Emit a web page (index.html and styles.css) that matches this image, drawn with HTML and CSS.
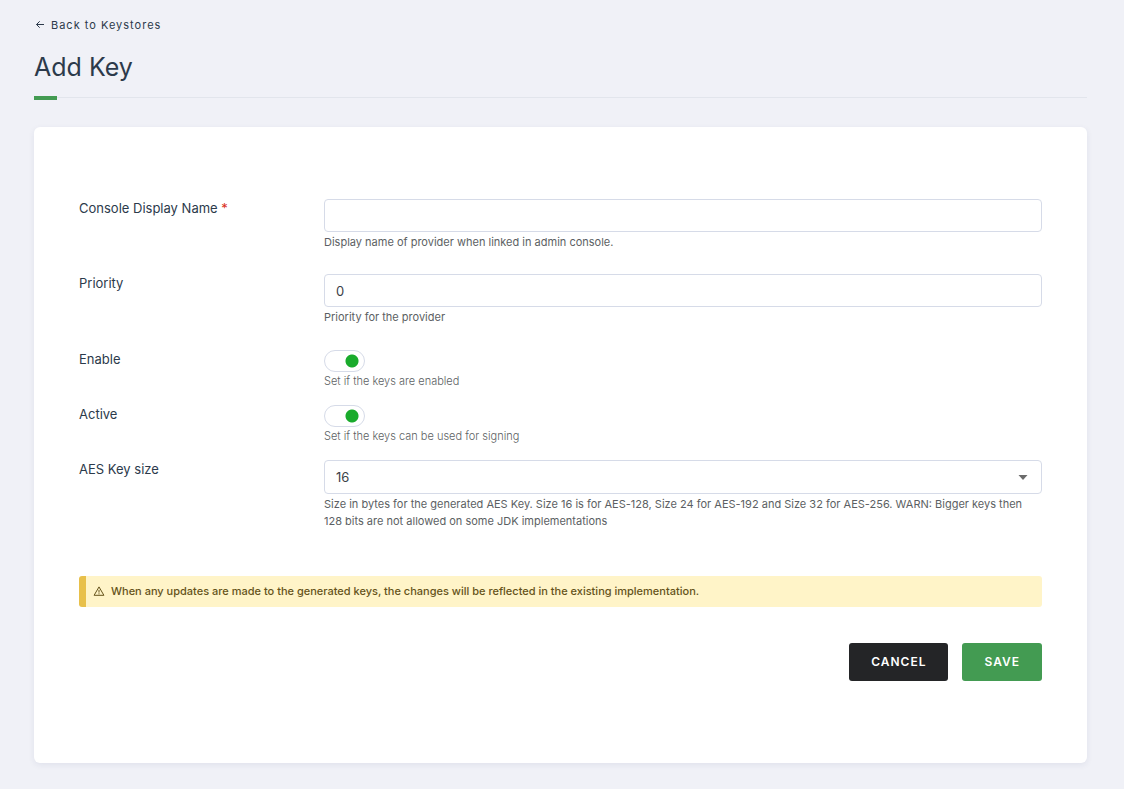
FILE: index.html
```html
<!DOCTYPE html>
<html lang="en">
<head>
<meta charset="utf-8">
<meta name="viewport" content="width=device-width, initial-scale=1">
<title>Add Key</title>
<link rel="stylesheet" href="styles.css">
</head>
<body>
<main class="page">
  <a class="back" href="#">
    <svg class="back-icon" viewBox="0 0 10 10" aria-hidden="true"><path d="M9 4.5H1.5M4.7 1.3 1.5 4.5l3.2 3.2"/></svg>
    <span>Back to Keystores</span>
  </a>
  <h1 class="title">Add Key</h1>
  <div class="divider"></div>
  <form class="card">
    <div class="field">
      <label class="label" for="name">Console Display Name <span class="required">*</span></label>
      <div class="control">
        <input class="input" id="name" type="text" required>
        <p class="help">Display name of provider when linked in admin console.</p>
      </div>
    </div>
    <div class="field field-number">
      <label class="label" for="priority">Priority</label>
      <div class="control">
        <input class="input" id="priority" type="text" value="0">
        <p class="help">Priority for the provider</p>
      </div>
    </div>
    <div class="field field-switch">
      <label class="label" for="enable">Enable</label>
      <div class="control">
        <input class="switch" id="enable" type="checkbox" checked>
        <p class="help">Set if the keys are enabled</p>
      </div>
    </div>
    <div class="field field-switch">
      <label class="label" for="active">Active</label>
      <div class="control">
        <input class="switch" id="active" type="checkbox" checked>
        <p class="help">Set if the keys can be used for signing</p>
      </div>
    </div>
    <div class="field field-select">
      <label class="label" for="size">AES Key size</label>
      <div class="control">
        <div class="select-wrap">
          <select class="input select" id="size"><option>16</option><option>24</option><option>32</option></select>
          <svg class="caret" viewBox="0 0 10 5" aria-hidden="true"><path d="M0.5 0h9L5 5z"/></svg>
        </div>
        <p class="help">Size in bytes for the generated AES Key. Size 16 is for AES-128, Size 24 for AES-192 and Size 32 for AES-256. WARN: Bigger keys then 128 bits are not allowed on some JDK implementations</p>
      </div>
    </div>
    <div class="notice">
      <svg class="notice-icon" viewBox="0 0 12 11" aria-hidden="true"><path d="M6 .9 10.9 9.3H1.1zM6 3.8v2.8M6 7.3v1"/></svg>
      <span>When any updates are made to the generated keys, the changes will be reflected in the existing implementation.</span>
    </div>
    <div class="actions">
      <button class="button button-dark" type="button">CANCEL</button>
      <button class="button button-green" type="submit">SAVE</button>
    </div>
  </form>
</main>
</body>
</html>
```
FILE: styles.css
```css
* {
  box-sizing: border-box;
}

body {
  margin: 0;
  background: #f0f1f7;
  color: #2c3a4b;
  font-family: Inter, "Liberation Sans", sans-serif;
  font-size: 13px;
}

.page {
  padding: 16px 37px 26px 34px;
}

.back {
  display: flex;
  align-items: center;
  gap: 6px;
  width: fit-content;
  padding-left: 1px;
  color: inherit;
  font-size: 11px;
  line-height: 18px;
  letter-spacing: 1px;
  text-decoration: none;
}

.back-icon {
  width: 10px;
  height: 10px;
  fill: none;
  stroke: currentColor;
  stroke-width: 1;
}

.title {
  margin: 16px 0 12px;
  font-size: 25px;
  font-weight: 400;
  line-height: 34px;
}

.divider {
  height: 4px;
  margin-bottom: 27px;
  background:
    linear-gradient(#439b52, #439b52) 0 0 / 23px 4px no-repeat,
    linear-gradient(#e2e5ec, #e2e5ec) 0 1px / 100% 1px no-repeat;
}

.card {
  padding: 72px 45px 82px;
  border-radius: 6px;
  background: #fff;
  box-shadow: 0 2px 6px rgba(40, 50, 100, 0.08);
}

.field {
  display: grid;
  grid-template-columns: 245px minmax(0, 1fr);
  margin-bottom: 23px;
}

.field-number {
  margin-bottom: 24px;
}

.field-switch {
  margin-bottom: 15px;
}

.field-select {
  margin-bottom: 46px;
}

.label {
  line-height: 18px;
}

.required {
  color: #d92d20;
}

.input {
  display: block;
  width: 100%;
  height: 33px;
  padding: 0 11px;
  border: 1px solid #d6dbe8;
  border-radius: 4px;
  background: #fff;
  color: #3c4148;
  font: inherit;
}

.help {
  margin: 2px 0 0;
  color: #5c5f63;
  font-size: 11px;
  line-height: 17px;
}

.field-switch .help {
  margin-top: 1px;
  font-weight: 300;
}

.switch {
  display: block;
  width: 41px;
  height: 22px;
  margin: 0;
  border: 1px solid #d6dbe8;
  border-radius: 11px;
  background: radial-gradient(circle at 27px 10px, #1aab2c 6px, #fff 7px);
  appearance: none;
}

.select-wrap {
  position: relative;
}

.select {
  height: 34px;
  appearance: none;
}

.caret {
  position: absolute;
  top: 15px;
  right: 14px;
  width: 10px;
  height: 5px;
  fill: #6b6b6b;
  pointer-events: none;
}

.notice {
  display: flex;
  align-items: center;
  gap: 6px;
  padding: 7px;
  border-left: 7px solid #e8c04a;
  border-radius: 3px;
  background: #fff4c8;
  color: #65531a;
  font-size: 11px;
  font-weight: 500;
  line-height: 17px;
}

.notice-icon {
  width: 12px;
  height: 11px;
  fill: none;
  stroke: currentColor;
  stroke-linejoin: round;
}

.actions {
  display: flex;
  justify-content: flex-end;
  gap: 14px;
  margin-top: 36px;
}

.button {
  height: 38px;
  padding: 0 22px;
  border: 0;
  border-radius: 3px;
  color: #fff;
  font: 600 12px/18px Inter, "Liberation Sans", sans-serif;
  letter-spacing: 1px;
}

.button-dark {
  background: #242527;
}

.button-green {
  background: #439b52;
}
```
